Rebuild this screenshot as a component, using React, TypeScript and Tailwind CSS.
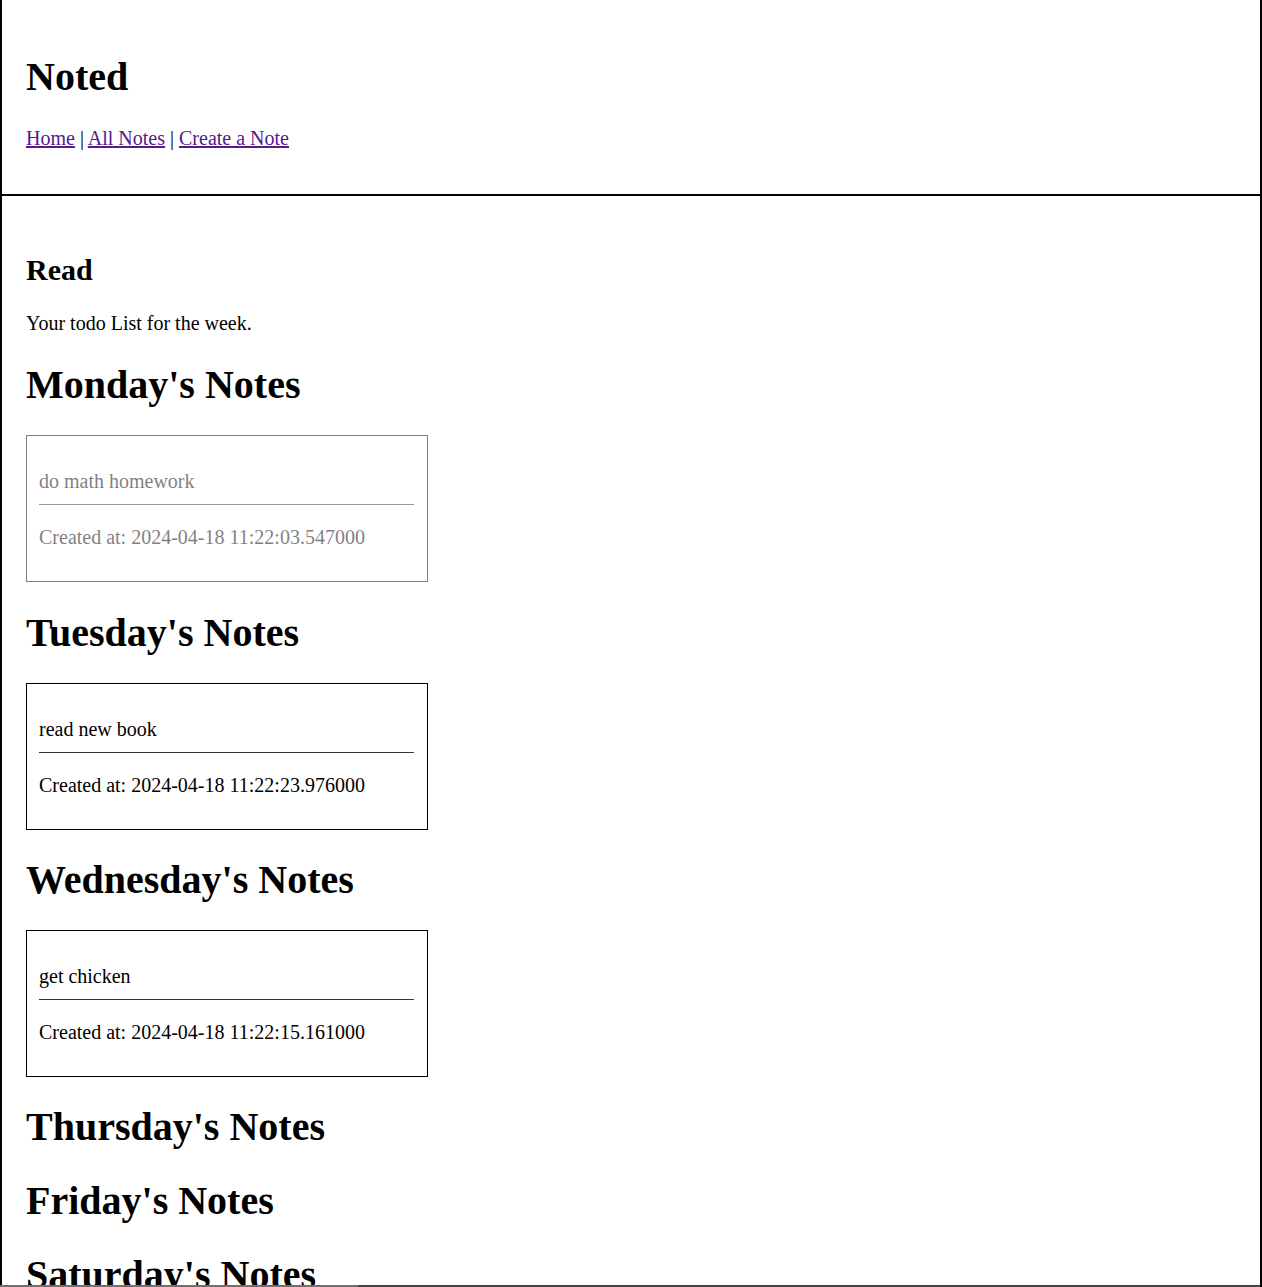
import React from "react"

interface Note {
  text: string
  createdAt: string
  done?: boolean
}

const days: { name: string; notes: Note[] }[] = [
  { name: "Monday", notes: [{ text: "do math homework", createdAt: "2024-04-18 11:22:03.547000", done: true }] },
  { name: "Tuesday", notes: [{ text: "read new book", createdAt: "2024-04-18 11:22:23.976000" }] },
  { name: "Wednesday", notes: [{ text: "get chicken", createdAt: "2024-04-18 11:22:15.161000" }] },
  { name: "Thursday", notes: [] },
  { name: "Friday", notes: [] },
  { name: "Saturday", notes: [] },
  { name: "Sunday", notes: [] },
]

function NoteCard({ note }: { note: Note }) {
  return (
    <div
      className={`w-[402px] border border-black pl-[12px] pr-[13px] pt-[34px] pb-[32px] ${
        note.done ? "opacity-50" : ""
      }`}
    >
      <p className="text-[20px] leading-[23px]">{note.text}</p>
      <div className="mt-[11px] h-px bg-[#333]" />
      <p className="mt-[21px] text-[20px] leading-[23px]">Created at: {note.createdAt}</p>
    </div>
  )
}

function headingSpacing(i: number, hasNotes: boolean) {
  if (i === 0) return "mt-[27px] mb-[27px]"
  if (hasNotes) return "mt-[27.5px] mb-[27px]"
  return "mt-[26.5px] mb-[28px]"
}

export default function App() {
  return (
    <div className="min-h-screen w-full border-x-2 border-black bg-white font-['Liberation_Serif',serif] text-black">
      {/* Header */}
      <header className="border-b-2 border-black pl-[24px] pt-[53.5px] pb-[44.5px]">
        <h1 className="text-[40px] font-bold leading-[46px]">Noted</h1>
        <nav className="mt-[27px] text-[20px] leading-[23px]">
          <a href="#" className="text-[#551a8b] underline">Home</a>
          {" | "}
          <a href="#" className="text-[#551a8b] underline">All Notes</a>
          {" | "}
          <a href="#" className="text-[#551a8b] underline">Create a Note</a>
        </nav>
      </header>

      {/* Week list */}
      <main className="pl-[24px] pt-[57px] pb-[40px]">
        <h2 className="text-[30px] font-bold leading-[34px]">Read</h2>
        <p className="mt-[25px] text-[20px] leading-[23px]">Your todo List for the week.</p>
        {days.map((day, i) => (
          <section key={day.name}>
            <h1 className={`${headingSpacing(i, day.notes.length > 0)} text-[40px] font-bold leading-[46px]`}>
              {day.name}'s Notes
            </h1>
            {day.notes.map((note) => (
              <NoteCard key={note.createdAt} note={note} />
            ))}
          </section>
        ))}
      </main>

      {/* bottom edge strip */}
      <div className="fixed bottom-0 left-0 flex h-[2px] w-[1260px]">
        <div className="w-[358px] bg-[#707070]" />
        <div className="flex-1 bg-[#454545]" />
      </div>
    </div>
  )
}
